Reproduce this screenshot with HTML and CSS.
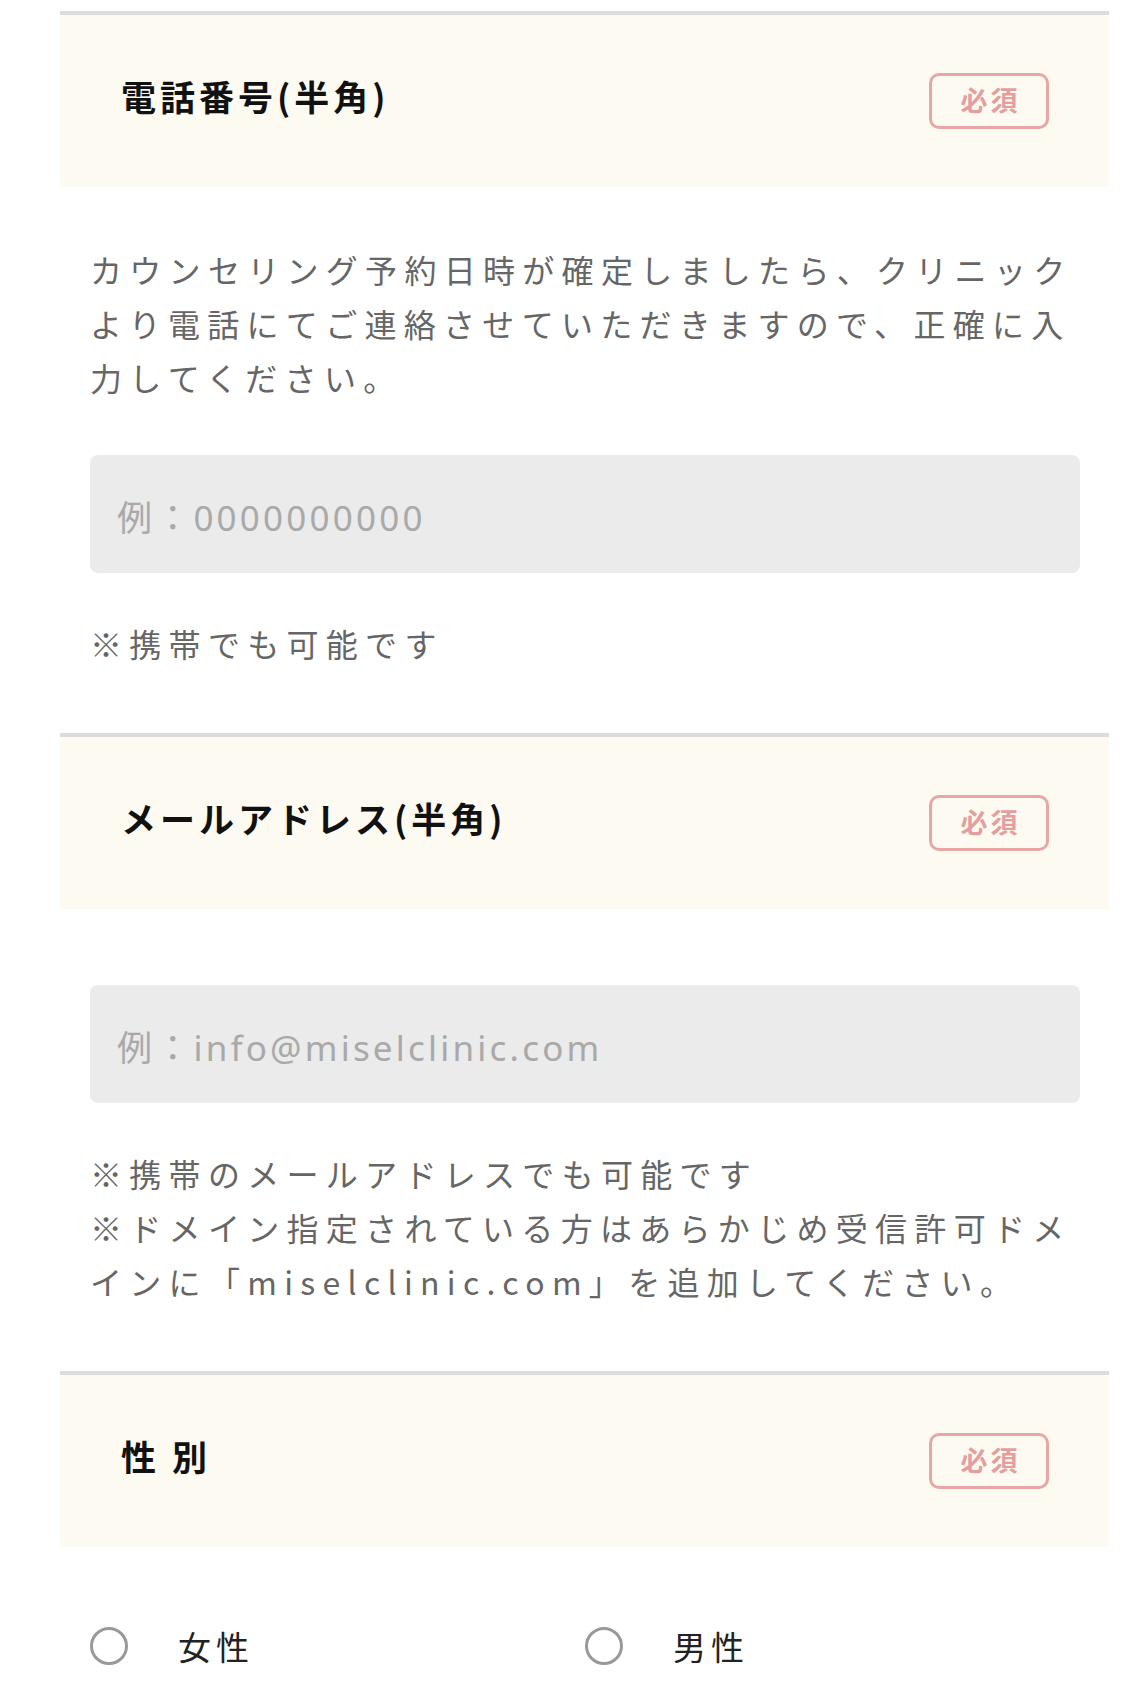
FILE: index.html
```html
<!DOCTYPE html>
<html lang="ja">
<head>
  <meta charset="utf-8">
  <title>お問い合わせフォーム</title>
  <link rel="stylesheet" href="styles.css">
</head>
<body>
  <form class="form" onsubmit="return false">
    <div class="field">
      <div class="field-head">
        <span class="field-title">電話番号(半角)</span>
        <span class="badge">必須</span>
      </div>
      <div class="field-body">
        <p class="text">カウンセリング予約日時が確定しましたら、クリニックより電話にてご連絡させていただきますので、正確に入力してください。</p>
        <input class="input" type="tel" placeholder="例：0000000000">
        <p class="text note">※携帯でも可能です</p>
      </div>
    </div>

    <div class="field">
      <div class="field-head">
        <span class="field-title">メールアドレス(半角)</span>
        <span class="badge">必須</span>
      </div>
      <div class="field-body">
        <input class="input" type="email" placeholder="例：info@miselclinic.com">
        <p class="text note">※携帯のメールアドレスでも可能です<br>※ドメイン指定されている方はあらかじめ受信許可ドメインに「miselclinic.com」を追加してください。</p>
      </div>
    </div>

    <div class="field">
      <div class="field-head">
        <span class="field-title">性 別</span>
        <span class="badge">必須</span>
      </div>
      <div class="field-body">
        <div class="radios">
          <label class="radio"><input type="radio" name="sex" value="f"><span>女性</span></label>
          <label class="radio"><input type="radio" name="sex" value="m"><span>男性</span></label>
        </div>
      </div>
    </div>
  </form>
</body>
</html>
```

FILE: styles.css
```css
body { margin: 0; background: #fff; font-family: "Noto Sans CJK JP", "Noto Sans", sans-serif; color: #222; }
.form { padding: 11px 21px 0 60px; }
.field { border-top: 4px solid #dcdcdc; }
.field-head { display: flex; align-items: center; justify-content: space-between; height: 172px; padding: 0 60px 0 61px; background: #fdfaf2; }
.field-title { font-size: 35px; font-weight: bold; letter-spacing: 4px; color: #111; margin-bottom: 11px; }
.badge { box-sizing: border-box; width: 120px; height: 56px; display: flex; align-items: center; justify-content: center; border: 3px solid #e9a6a6; border-radius: 10px; color: #e49e9e; font-size: 27px; font-weight: bold; letter-spacing: 3px; padding: 0 0 3px 3px; }
.field-body { padding: 55px 29px 63px 30px; }
.text { margin: 0; font-size: 32px; line-height: 54px; letter-spacing: 7.3px; color: #666; }
.note { margin-top: 43px; }
.input { display: block; box-sizing: border-box; width: 100%; height: 118px; margin: 51px 0 0; padding: 6px 27px 0; border: none; border-radius: 8px; background: #ebebeb; font-family: "Noto Sans", "Noto Sans CJK JP", sans-serif; font-size: 35px; letter-spacing: 3.2px; color: #333; }
.input::placeholder { color: #a9a9a9; }
.field-body > .input:first-child { margin-top: 21px; }
.radios { display: grid; grid-template-columns: 1fr 1fr; margin-top: 17px; }
.radio { display: flex; align-items: center; gap: 50px; font-size: 33px; line-height: 54px; letter-spacing: 5px; color: #222; }
.radio input { appearance: none; -webkit-appearance: none; box-sizing: border-box; width: 38px; height: 38px; margin: 0; border: 3px solid #999; border-radius: 50%; background: #fff; }
```
